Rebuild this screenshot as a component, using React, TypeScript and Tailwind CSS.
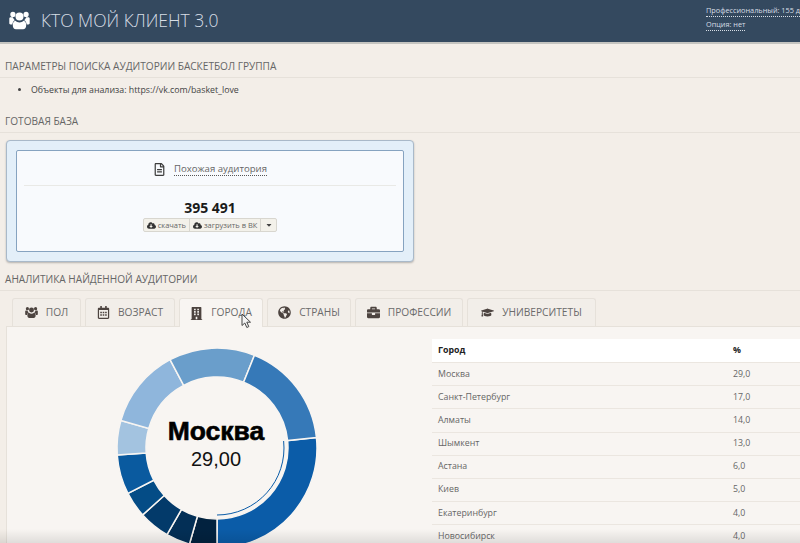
import type { ComponentType } from "react";
import {
  FaBriefcase,
  FaBuilding,
  FaCaretDown,
  FaCloudDownloadAlt,
  FaGlobeAmericas,
  FaGraduationCap,
  FaRegCalendarAlt,
  FaRegFileAlt,
} from "react-icons/fa";

type Tab = {
  label: string;
  icon: ComponentType<{ className?: string }>;
  width: string;
  active?: boolean;
};

function UsersIcon({ className }: { className?: string }) {
  return (
    <svg viewBox="0 0 21 21" fill="currentColor" className={className}>
      <circle cx="10.5" cy="6.6" r="4" />
      <circle cx="3.9" cy="4.4" r="2.6" />
      <circle cx="17.1" cy="4.4" r="2.6" />
      <path d="M0.3 8.6c0-1 .8-1.3 1.6-1.3h2c.4 1.3 1 2.3 2 3-1.400.6-2.400 2.100-2.500 4.200H1.500c-.7 0-1.200-.5-1.200-1.200z" />
      <path d="M20.700 8.600c0-1-.8-1.300-1.600-1.300h-2c-.4 1.300-1 2.300-2 3 1.400.6 2.400 2.100 2.500 4.200h1.900c.7 0 1.200-.5 1.200-1.200z" />
      <path d="M6.500 10.800c1 1 2.400 1.600 4 1.600s3-.6 4-1.600c1.700.2 2.700 1.800 2.700 4.700 0 2.400-1.300 3.700-3.100 3.700H6.900c-1.800 0-3.100-1.300-3.100-3.700 0-2.900 1-4.500 2.700-4.700z" />
    </svg>
  );
}

const TABS: Tab[] = [
  { label: "ПОЛ", icon: UsersIcon, width: "w-[69px]" },
  { label: "ВОЗРАСТ", icon: FaRegCalendarAlt, width: "w-[90px]" },
  { label: "ГОРОДА", icon: FaBuilding, width: "w-[84px]", active: true },
  { label: "СТРАНЫ", icon: FaGlobeAmericas, width: "w-[84px]" },
  { label: "ПРОФЕССИИ", icon: FaBriefcase, width: "w-[108px]" },
  { label: "УНИВЕРСИТЕТЫ", icon: FaGraduationCap, width: "w-[129px]" },
];

const CITIES = [
  ["Москва", "29,0"],
  ["Санкт-Петербург", "17,0"],
  ["Алматы", "14,0"],
  ["Шымкент", "13,0"],
  ["Астана", "6,0"],
  ["Киев", "5,0"],
  ["Екатеринбург", "4,0"],
  ["Новосибирск", "4,0"],
];

// angles are clockwise from the top of the ring
const SLICES = [
  { from: 84, to: 180, color: "#0b5ca8" },
  { from: 180, to: 196, color: "#02223f" },
  { from: 196, to: 210, color: "#032f56" },
  { from: 210, to: 228, color: "#033a6a" },
  { from: 228, to: 243, color: "#044c86" },
  { from: 243, to: 266, color: "#0a5a9f" },
  { from: 266, to: 286, color: "#a3c3e0" },
  { from: 286, to: 332, color: "#8fb6dc" },
  { from: 332, to: 382, color: "#6a9ecb" },
  { from: 382, to: 444, color: "#3679b8" },
];

const CX = 104;
const CY = 104;

function point(radius: number, angle: number) {
  const rad = (angle * Math.PI) / 180;
  return `${(CX + radius * Math.sin(rad)).toFixed(2)} ${(CY - radius * Math.cos(rad)).toFixed(2)}`;
}

function slicePath(from: number, to: number, outer: number, inner: number) {
  const large = to - from > 180 ? 1 : 0;
  return `M${point(outer, from)} A${outer} ${outer} 0 ${large} 1 ${point(outer, to)} L${point(inner, to)} A${inner} ${inner} 0 ${large} 0 ${point(inner, from)} Z`;
}

function Donut() {
  return (
    <svg width="208" height="208" viewBox="0 0 208 208" className="block shrink-0">
      {SLICES.map((slice) => (
        <path
          key={slice.from}
          d={slicePath(slice.from, slice.to, 100, 71)}
          fill={slice.color}
          stroke="#f8f5f2"
          strokeWidth="1.5"
        />
      ))}
      <path
        d={`M${point(67, 84)} A67 67 0 0 1 ${point(67, 180)}`}
        fill="none"
        stroke="#0b5ca8"
        strokeWidth="1"
      />
      <text
        x={CX - 1}
        y="96"
        textAnchor="middle"
        fill="#000"
        stroke="#000"
        strokeWidth="0.6"
        fontSize="26.500"
        fontWeight="700"
        fontFamily="'Liberation Sans', sans-serif"
      >
        Москва
      </text>
      <text
        x={CX - 1}
        y="122"
        textAnchor="middle"
        fill="#111"
        fontSize="20"
        fontFamily="'Liberation Sans', sans-serif"
      >
        29,00
      </text>
    </svg>
  );
}

function Heading({ children }: { children: string }) {
  return (
    <h2 className="h-[23px] border-b border-[#e6e1da] pl-[5px] text-[10.1px] leading-[22px] text-[#666]">
      {children}
    </h2>
  );
}

function TabButton({ tab }: { tab: Tab }) {
  const Icon = tab.icon;
  return (
    <div
      className={`flex h-[28px] items-center justify-center gap-2 rounded-t-[3px] border border-b-0 border-[#e6e1da] text-[10.2px] text-[#6b6b6b] ${tab.width} ${
        tab.active ? "-mb-px h-[29px] bg-[#f8f5f2]" : "bg-[#f2eee9]"
      }`}
    >
      <Icon className="size-[13px] shrink-0 text-[#4d4440]" />
      <span>{tab.label}</span>
    </div>
  );
}

export default function App() {
  return (
    <div className="relative h-[543px] w-[800px] overflow-hidden bg-[#f3eee8] font-['Open_Sans',sans-serif]">
      <header className="flex h-[44px] items-center justify-between border-b-2 border-[#c4c4c0] bg-[#34495f]">
        <div className="flex items-center gap-[11px] pb-[2px] pl-[9px]">
          <UsersIcon className="size-[21px] text-white" />
          <span className="text-[17.500px] font-light text-[#d7dee6]">КТО МОЙ КЛИЕНТ 3.0</span>
        </div>
        <div className="flex w-[94px] flex-col items-start gap-[2px] self-start whitespace-nowrap pt-[5px] text-[7.300px] leading-[11px] text-[#d7dee6]">
          <span className="border-b border-dotted border-[#d7dee6]">Профессиональный: 155 д</span>
          <span className="border-b border-dotted border-[#d7dee6]">Опция: нет</span>
        </div>
      </header>

      <section className="pt-[11px]">
        <Heading>ПАРАМЕТРЫ ПОИСКА АУДИТОРИИ БАСКЕТБОЛ ГРУППА</Heading>
        <ul className="mt-[6px] list-disc pl-[31px] text-[8.800px] leading-[12px] text-[#444]">
          <li>Объекты для анализа: https://vk.com/basket_love</li>
        </ul>
      </section>

      <section className="pt-[14px]">
        <Heading>ГОТОВАЯ БАЗА</Heading>
        <div className="ml-[6px] mt-[7px] h-[122px] w-[408px] rounded-[4px] border border-[#a9b9c9] bg-[#e3eff9] p-[9px] shadow-[0_1px_2px_rgba(0,0,0,0.25)]">
          <div className="flex h-[102px] flex-col items-center rounded-[2px] border border-[#86a3c0] bg-[#f8fafd] px-[7px]">
            <div className="flex h-[35px] w-full items-center justify-center gap-[8px] border-b border-[#e9e9e6] pt-[3px]">
              <FaRegFileAlt className="text-[13px] text-[#3d3d3d]" />
              <span className="border-b border-dotted border-[#555] text-[9.600px] leading-[12px] text-[#666]">
                Похожая аудитория
              </span>
            </div>
            <div className="mt-[14px] text-[14px] font-bold leading-[16px] text-[#1a1a1a]">395 491</div>
            <div className="mt-[2px] flex h-[14px] items-stretch rounded-[2px] border border-[#d8d6cf] bg-[#f3f1ea] text-[7.500px] leading-[12px] text-[#666]">
              <span className="flex items-center gap-[2px] border-r border-[#d8d6cf] px-[3px]">
                <FaCloudDownloadAlt className="text-[9px] text-[#333]" />
                скачать
              </span>
              <span className="flex items-center gap-[2px] border-r border-[#d8d6cf] px-[3px]">
                <FaCloudDownloadAlt className="text-[9px] text-[#333]" />
                загрузить в ВК
              </span>
              <span className="flex w-[15px] items-center justify-center">
                <FaCaretDown className="text-[8px] text-[#444]" />
              </span>
            </div>
          </div>
        </div>
      </section>

      <section className="pt-[6px]">
        <Heading>АНАЛИТИКА НАЙДЕННОЙ АУДИТОРИИ</Heading>
        <div className="mt-[7px] flex items-end gap-[4px] pl-[12px]">
          {TABS.map((tab) => (
            <TabButton key={tab.label} tab={tab} />
          ))}
        </div>
        <div className="ml-[6px] flex h-[260px] border-l border-t border-[#e6e1da] bg-[#f8f5f2]">
          <div className="w-[425px] shrink-0 pl-[106px] pt-[17px]">
            <Donut />
          </div>
          <div className="flex-1 pt-[12px] text-[8.800px] text-[#666]">
            <div className="flex h-[24px] items-center border-b border-[#ebe6e0] bg-white pl-[6px] font-bold text-[#222]">
              <span className="w-[295px]">Город</span>
              <span>%</span>
            </div>
            {CITIES.map(([city, share]) => (
              <div key={city} className="flex h-[23.2px] items-center border-b border-[#ebe6e0] pl-[6px]">
                <span className="w-[295px]">{city}</span>
                <span>{share}</span>
              </div>
            ))}
          </div>
        </div>
      </section>

      <div className="pointer-events-none absolute inset-x-0 bottom-0 h-[14px] bg-gradient-to-b from-transparent to-black/10" />

      <svg width="12" height="16" viewBox="0 0 12 16" className="absolute left-[241px] top-[313px]">
        <path
          d="M1 1v11.5l2.8-2.5 2 4.5 2-.9-2-4.4h3.7L1 1z"
          fill="#f4f4f4"
          stroke="#444"
          strokeWidth="1"
          strokeLinejoin="round"
        />
      </svg>
    </div>
  );
}
